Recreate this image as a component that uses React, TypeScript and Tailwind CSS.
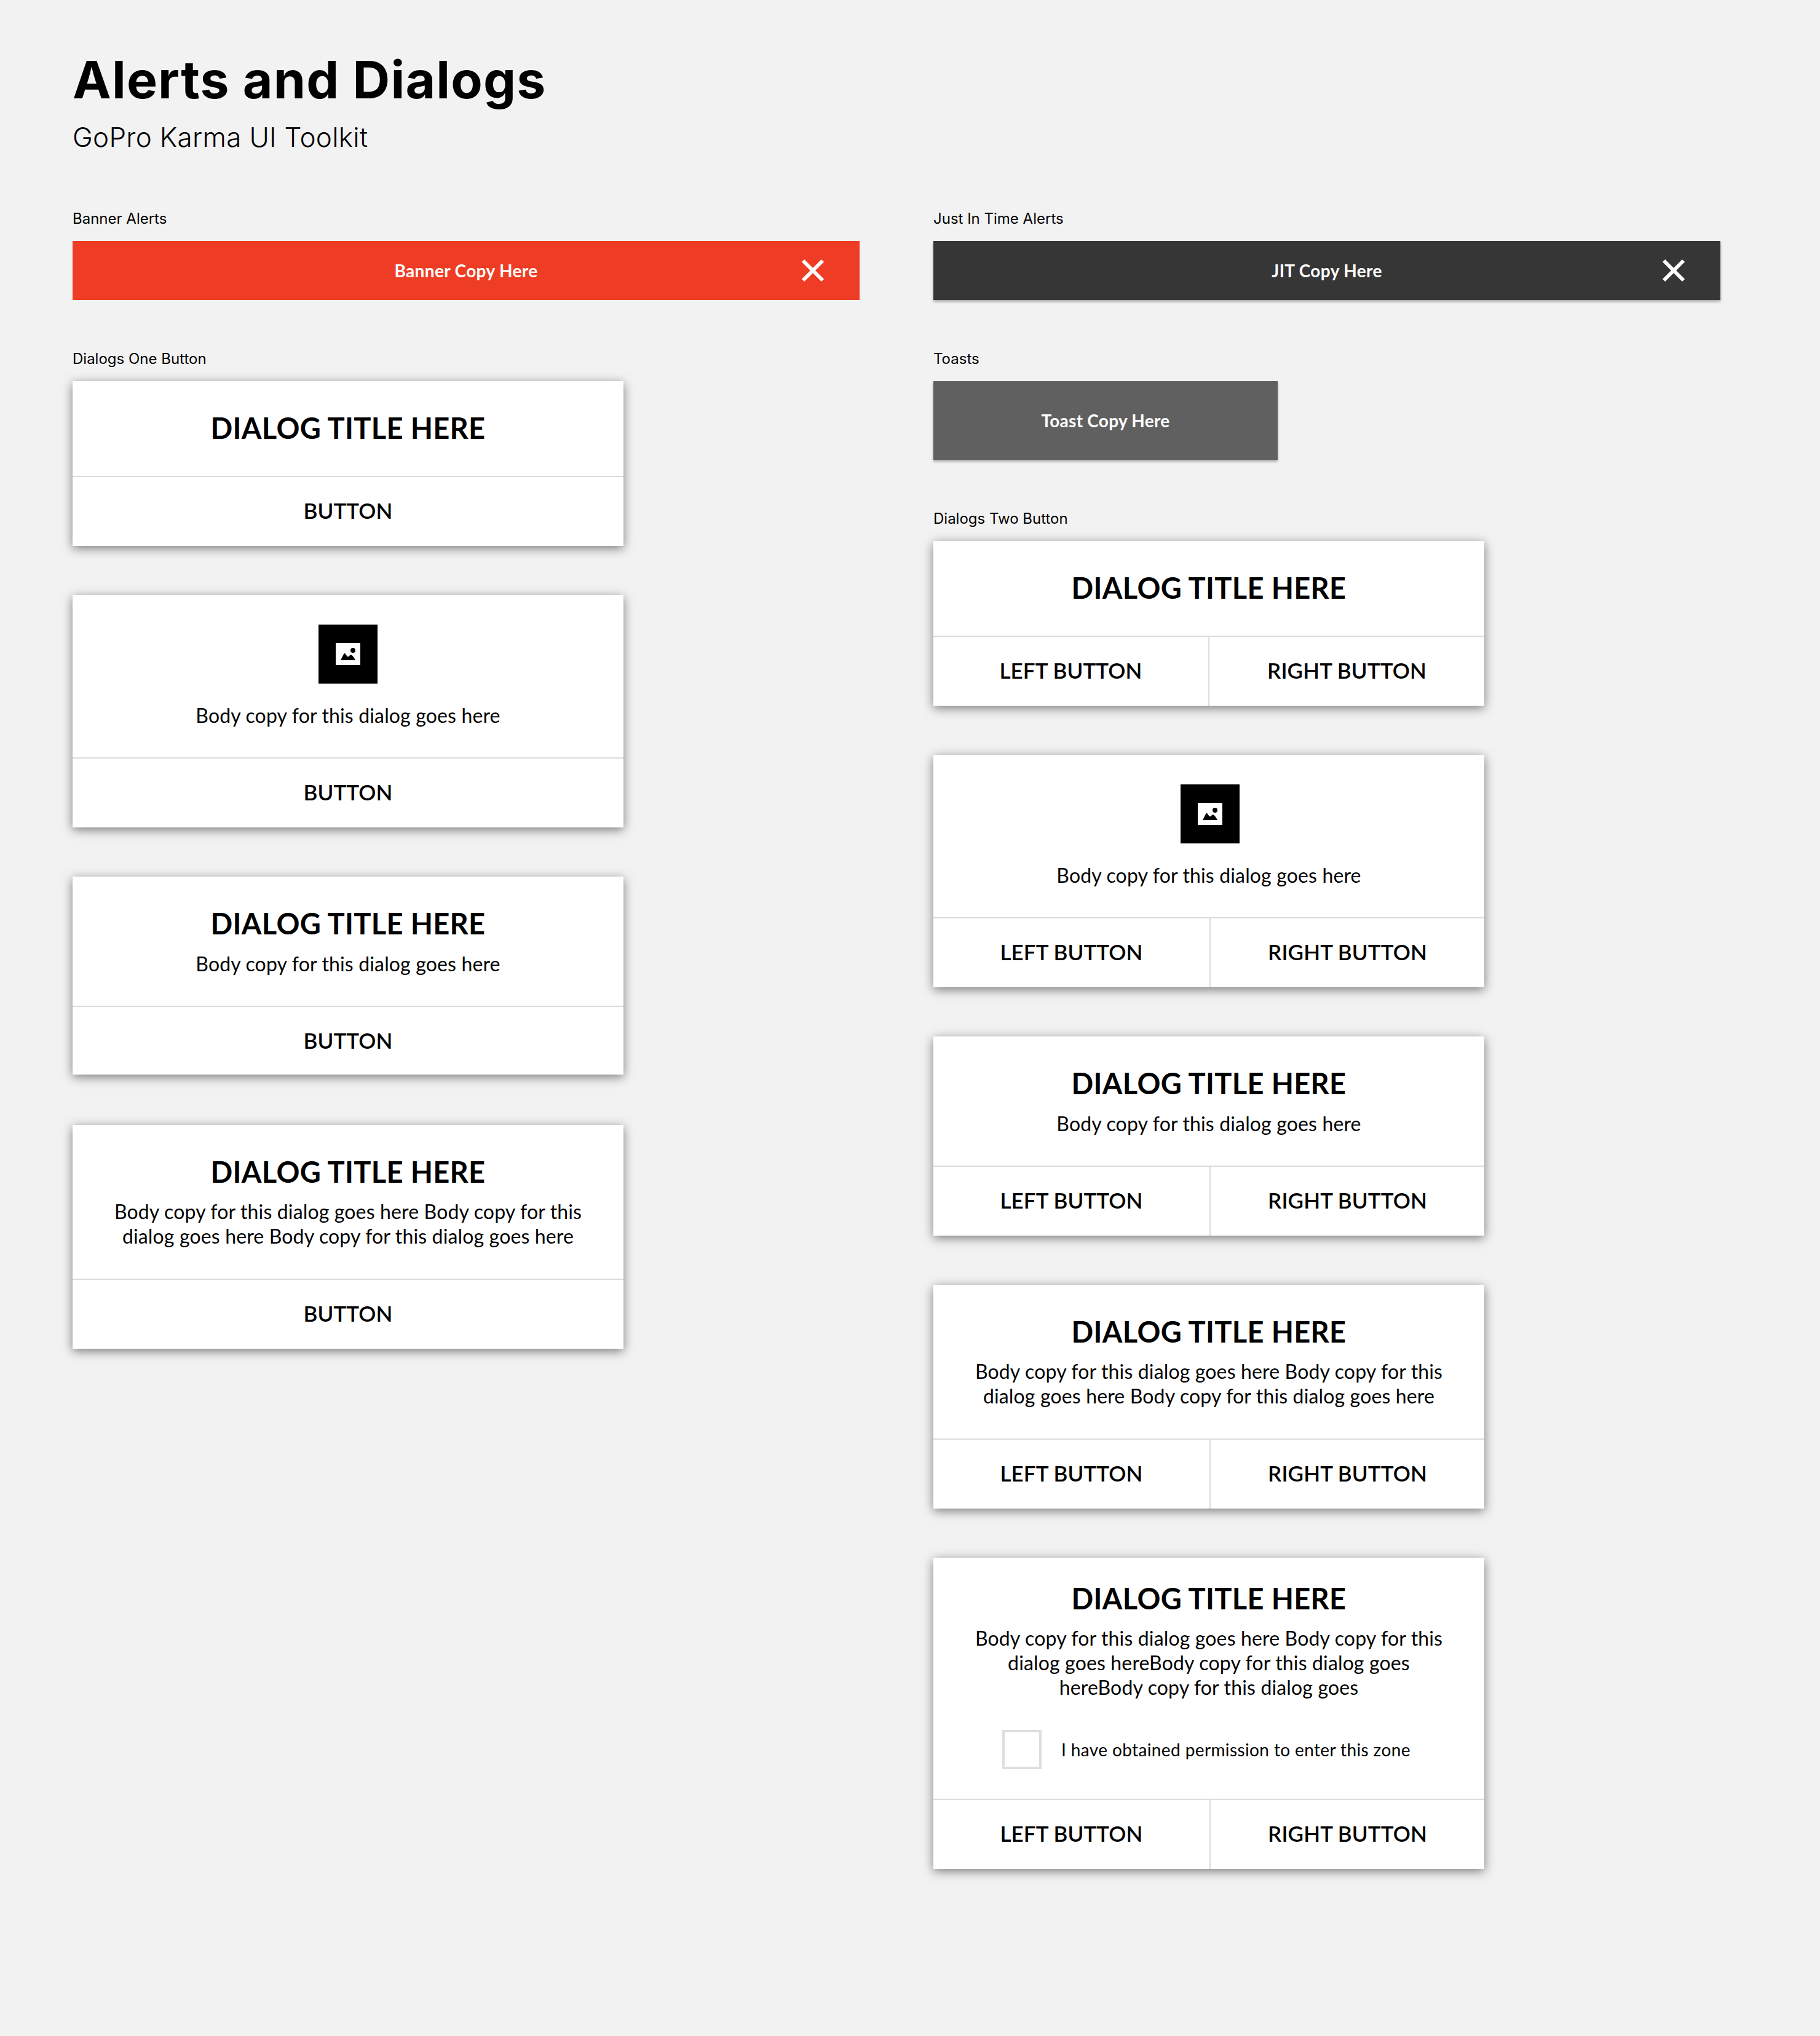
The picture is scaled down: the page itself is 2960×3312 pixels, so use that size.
import React from 'react';

const copyFont = "font-['Lato','Liberation_Sans',sans-serif]";

const ImageIcon = ({ className = '' }: { className?: string }) => (
  <div className={`w-[96px] h-[96px] bg-black flex items-center justify-center shrink-0 ${className}`}>
    <svg width="40" height="36" viewBox="0 0 40 36">
      <rect width="40" height="36" fill="#fff" />
      <circle cx="28" cy="12" r="4" fill="#000" />
      <path d="M8 28 L13 18 Q14.500 15.500 16 18 L18.500 21.500 Q20 23 21.500 21.500 L23 20 Q25 18.500 27 20.500 Q30 23.500 32 28 Z" fill="#000" />
    </svg>
  </div>
);

const CloseIcon = () => (
  <svg width="40" height="40" viewBox="0 0 40 40" className="absolute right-[56px] top-[28px]">
    <path d="M4 4 L36 36 M36 4 L4 36" stroke="#fff" strokeWidth="6" />
  </svg>
);

const Label = ({ children }: { children: React.ReactNode }) => (
  <div className="h-[36px] mb-[19px] pt-[1px] text-[24px] leading-[36px] text-black">{children}</div>
);

const Title = () => (
  <h2 className="text-[47px] leading-[56px] font-bold text-black text-center tracking-[0.33px]">DIALOG TITLE HERE</h2>
);

const Body = ({ children, className = '' }: { children: React.ReactNode; className?: string }) => (
  <p className={`text-[32px] leading-[40px] text-black text-center tracking-[0.15px] ${className}`}>{children}</p>
);

const FooterOne = ({ size = 'h-[112px] pb-[4px]' }: { size?: string }) => (
  <div className={`${size} flex items-center justify-center text-[35px] font-semibold text-black tracking-[0.1px]`}>BUTTON</div>
);

const FooterTwo = ({ leftClass = 'w-[449px]' }: { leftClass?: string }) => (
  <div className="h-[112px] flex text-[35px] font-semibold text-black tracking-[0.1px]">
    <div className={`${leftClass} shrink-0 flex items-center justify-center pb-[4px]`}>LEFT BUTTON</div>
    <div className="flex-1 border-l-2 border-[#dcdcdc] flex items-center justify-center pb-[4px]">RIGHT BUTTON</div>
  </div>
);

const Dialog = ({ body, children, footer, className = '' }: { body: string; children: React.ReactNode; footer: React.ReactNode; className?: string }) => (
  <div className={`w-[896px] bg-white shadow-[0_4px_16px_rgba(0,0,0,0.5)] ${copyFont} ${className}`}>
    <div className={`${body} flex flex-col items-center border-b-2 border-[#dcdcdc]`}>{children}</div>
    {footer}
  </div>
);

const Bar = ({ text, bg }: { text: string; bg: string }) => (
  <div className={`relative h-[96px] w-[1280px] flex items-center justify-center ${bg} ${copyFont}`}>
    <span className="text-[28px] font-bold text-white tracking-[0.35px]">{text}</span>
    <CloseIcon />
  </div>
);

const oneLine = 'Body copy for this dialog goes here';
const twoLine = (
  <>
    Body copy for this dialog goes here Body copy for this
    <br />
    dialog goes here Body copy for this dialog goes here
  </>
);

export default function App() {
  return (
    <div className="min-h-[3312px] bg-[#f2f2f2] pl-[118px] font-['Inter',sans-serif]">
      <header className="h-[337px] pt-[78px]">
        <h1 className="text-[84px] leading-[104px] font-bold text-black tracking-[1.2px]">Alerts and Dialogs</h1>
        <p className="text-[44px] leading-[56px] font-light text-black mt-[13px] tracking-[0.3px]">GoPro Karma UI Toolkit</p>
      </header>

      <div className="flex gap-[120px]">
        <div className="w-[1280px]">
          <Label>Banner Alerts</Label>
          <Bar text="Banner Copy Here" bg="bg-[#ef3c24]" />
          <div className="mt-[77px]">
            <Label>Dialogs One Button</Label>
            <div className="flex flex-col gap-[80px]">
              <Dialog body="h-[156px] pt-[48px]" footer={<FooterOne />}>
                <Title />
              </Dialog>
              <Dialog body="h-[266px] pt-[48px]" footer={<FooterOne />}>
                <ImageIcon />
                <Body className="mt-[32px]">{oneLine}</Body>
              </Dialog>
              <Dialog body="h-[212px] pt-[48px]" footer={<FooterOne size="h-[110px] pb-[2px]" />} className="mb-[2px]">
                <Title />
                <Body className="mt-[18px]">{oneLine}</Body>
              </Dialog>
              <Dialog body="h-[252px] pt-[48px]" footer={<FooterOne />}>
                <Title />
                <Body className="mt-[17px]">{twoLine}</Body>
              </Dialog>
            </div>
          </div>
        </div>

        <div className="w-[1280px]">
          <Label>Just In Time Alerts</Label>
          <div className="shadow-[0_3px_4px_rgba(0,0,0,0.3)] w-[1280px]">
            <Bar text="JIT Copy Here" bg="bg-[#363636]" />
          </div>
          <div className="mt-[77px]">
            <Label>Toasts</Label>
            <div className={`w-[560px] h-[128px] bg-[#606060] flex items-center justify-center shadow-[0_3px_4px_rgba(0,0,0,0.3)] ${copyFont}`}>
              <span className="text-[28px] font-bold text-white tracking-[0.25px]">Toast Copy Here</span>
            </div>
          </div>
          <div className="mt-[77px]">
            <Label>Dialogs Two Button</Label>
            <div className="flex flex-col gap-[80px]">
              <Dialog body="h-[156px] pt-[48px]" footer={<FooterTwo leftClass="w-[447px]" />}>
                <Title />
              </Dialog>
              <Dialog body="h-[266px] pt-[48px]" footer={<FooterTwo />}>
                <ImageIcon className="ml-[4px]" />
                <Body className="mt-[32px]">{oneLine}</Body>
              </Dialog>
              <Dialog body="h-[212px] pt-[48px]" footer={<FooterTwo />}>
                <Title />
                <Body className="mt-[18px]">{oneLine}</Body>
              </Dialog>
              <Dialog body="h-[252px] pt-[48px]" footer={<FooterTwo />}>
                <Title />
                <Body className="mt-[17px]">{twoLine}</Body>
              </Dialog>
              <Dialog body="h-[394px] pt-[38px]" footer={<FooterTwo />}>
                <Title />
                <Body className="mt-[17px]">
                  Body copy for this dialog goes here Body copy for this
                  <br />
                  dialog goes hereBody copy for this dialog goes
                  <br />
                  hereBody copy for this dialog goes
                </Body>
                <div className="flex items-center mt-[49px] self-start ml-[112px]">
                  <div className="w-[64px] h-[64px] border-[4px] border-[#dedede] shrink-0" />
                  <span className="ml-[32px] text-[28px] leading-[40px] text-black tracking-[0.38px]">I have obtained permission to enter this zone</span>
                </div>
              </Dialog>
            </div>
          </div>
        </div>
      </div>
    </div>
  );
}
